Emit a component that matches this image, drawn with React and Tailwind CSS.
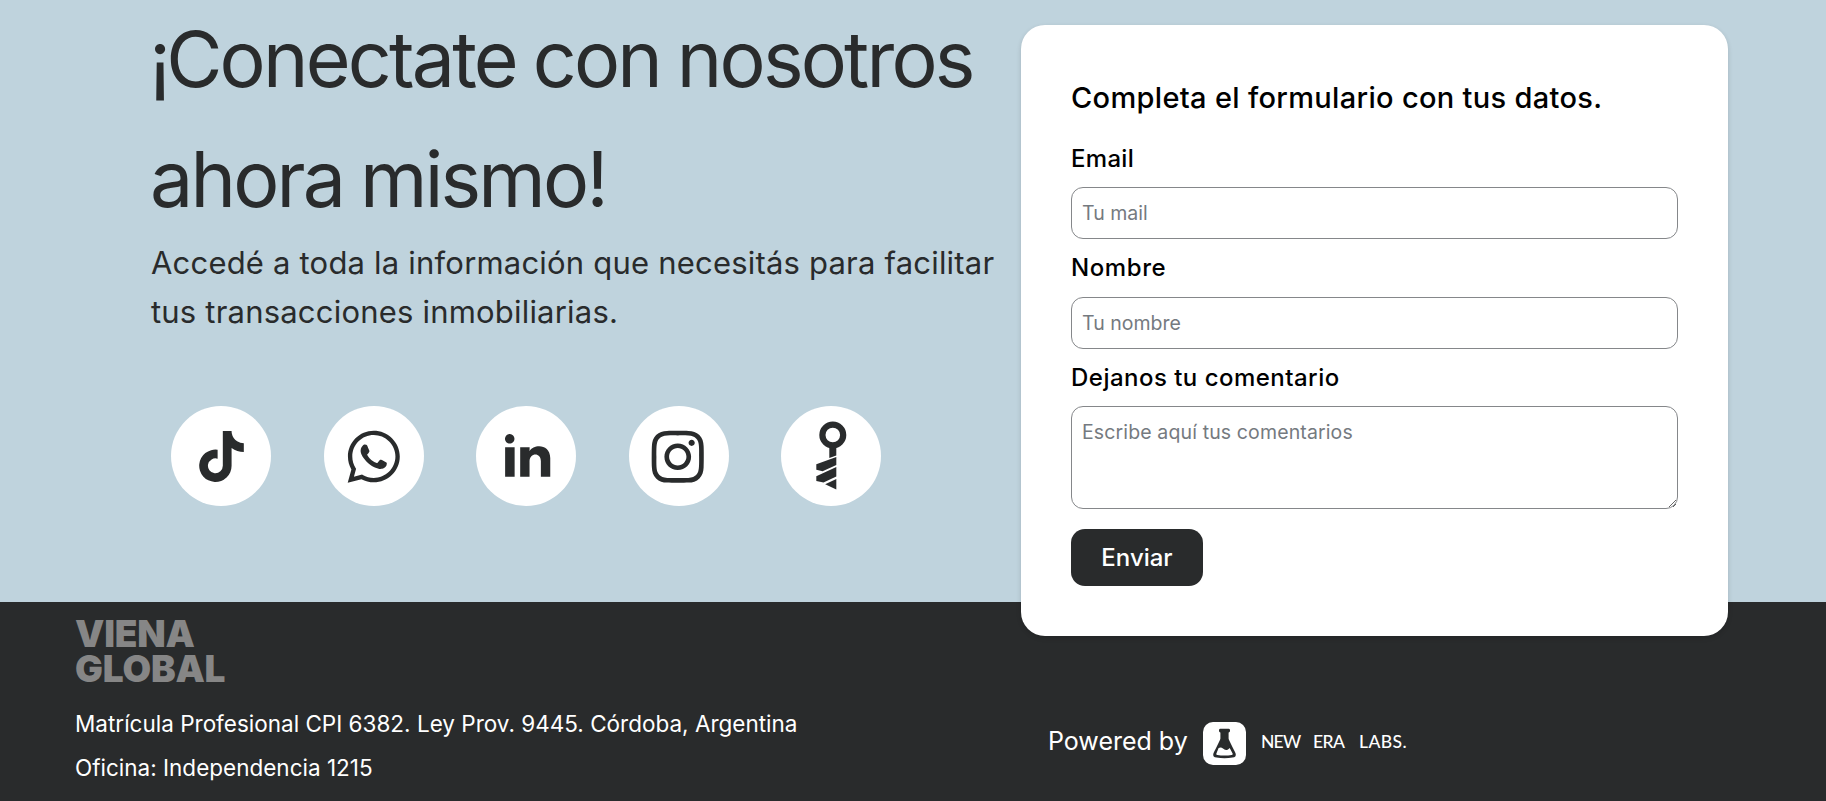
import { FaInstagram, FaTiktok, FaWhatsapp } from "react-icons/fa";
import { RiLinkedinFill } from "react-icons/ri";

function KeyIcon() {
  return (
    <svg viewBox="0 0 31 69" className="h-[69px] w-[31px]">
      <circle cx="16.8" cy="14" r="10.4" fill="none" stroke="currentColor" strokeWidth="6.2" />
      <path fill="currentColor" d="M13.3 25h7v9.6l-7 2.4z" />
      <path fill="currentColor" d="M0.3 43.2 20.3 36v8L6.6 50.2 0.3 48.8z" />
      <path fill="currentColor" d="M0.3 55.2 20.3 46v9.4L7.5 61.6 0.3 60z" />
      <path fill="currentColor" d="M9.2 63.2 20.3 58v10.4z" />
    </svg>
  );
}

function FlaskIcon() {
  return (
    <svg viewBox="0 0 43 43" className="h-[43px] w-[43px]">
      <rect x="16" y="6.8" width="11" height="3.6" rx="1.4" fill="currentColor" />
      <path
        d="M18.4 9v7.6c0 2-5.8 12-7 15-.7 2 .2 3 2.2 3 5 .8 10.8.8 15.8 0 2 0 2.9-1 2.2-3-1.2-3-7-13-7-15V9z"
        fill="currentColor"
        stroke="currentColor"
        strokeWidth="2"
        strokeLinejoin="round"
      />
      <path fill="#fff" d="M15.6 26c1.6-.8 3-.8 4.4.6 1.5 1.5 3.2 1.800 5 .9.7-.4 1.2-.9 1.7-1.5l2.9 5.6c.3.9 0 1.2-.9 1.3-4.6.7-9.8.7-14.400 0-.9-.1-1.200-.4-.9-1.300z" />
    </svg>
  );
}

const social = [
  { name: "TikTok", icon: <FaTiktok className="mt-px h-[51px] w-auto" /> },
  { name: "WhatsApp", icon: <FaWhatsapp className="mt-px h-[59.5px] w-auto" /> },
  { name: "LinkedIn", icon: <RiLinkedinFill className="h-[57px] w-[57px]" /> },
  { name: "Instagram", icon: <FaInstagram className="mt-px mr-px h-[59.5px] w-auto" /> },
  { name: "Inmobiliaria", icon: <KeyIcon /> },
];

const labelClass = "block text-[24px] leading-[36px] font-medium";
const fieldClass =
  "block w-full rounded-[12px] border border-[#85878a] bg-white px-[10px] text-[19.5px] text-black placeholder:text-[#757a80]";

export default function App() {
  return (
    <div className="h-[801px] w-full overflow-hidden bg-[#292b2c] font-['Inter',sans-serif]">
      <section className="flex h-[602px] items-start bg-[#bfd3dd] pl-[151px]">
        <div className="-mt-px w-[870px] shrink-0 text-[#292b2c]">
          <h1 className="-ml-px text-[77px] leading-[120px] tracking-[-2.8px] [word-spacing:-2px]">
            <span className="-ml-px tracking-[-5px]">¡</span>Conectate con nosotros
            <br />
            ahora mismo!
          </h1>
          <p className="-mt-px text-[31px] leading-[49.3px] tracking-[0.2px]">
            Accedé a toda la información que necesitás para facilitar tus transacciones inmobiliarias.
          </p>
          <div className="mt-[69.4px] ml-[20px] flex gap-[52.5px]">
            {social.map((s) => (
              <a key={s.name} aria-label={s.name} className="flex size-[100px] shrink-0 items-center justify-center rounded-full bg-white">
                {s.icon}
              </a>
            ))}
          </div>
        </div>

        <form className="relative z-10 mt-[25px] h-[611px] w-[707px] shrink-0 rounded-[24px] bg-white px-[50px] pt-[53px] text-black shadow-[0_2px_5px_rgba(0,0,0,0.15)]">
          <h2 className="text-[29px] leading-[40px] font-medium tracking-[0.32px]">Completa el formulario con tus datos.</h2>
          <label className={`${labelClass} mt-[23px] tracking-[0.3px]`}>Email</label>
          <input className={`${fieldClass} mt-[10px] h-[52px]`} placeholder="Tu mail" />
          <label className={`${labelClass} mt-[11px] tracking-[0.6px]`}>Nombre</label>
          <input className={`${fieldClass} mt-[11px] h-[52px]`} placeholder="Tu nombre" />
          <label className={`${labelClass} mt-[11px] tracking-[0.48px]`}>Dejanos tu comentario</label>
          <textarea
            className={`${fieldClass} mt-[10px] h-[103px] pt-[9.5px] leading-[30px] tracking-[0.13px]`}
            placeholder="Escribe aquí tus comentarios"
          />
          <button type="button" className="mt-[20px] flex h-[57px] w-[132px] items-center justify-center rounded-[14px] bg-[#292b2c] text-[24px] font-medium text-white">
            Enviar
          </button>
        </form>
      </section>

      <footer className="flex h-[199px] pl-[75px] text-white">
        <div className="w-[972px] shrink-0 pt-[14px]">
          <div className="text-[37px] leading-[35px] font-black tracking-[-0.2px] text-[#868686]">
            VIENA
            <br />
            GLOBAL
          </div>
          <p className="mt-[16px] text-[22.5px] leading-[44px]">
            Matrícula Profesional CPI 6382. Ley Prov. 9445. Córdoba, Argentina
            <br />
            Oficina: Independencia 1215
          </p>
        </div>
        <div className="mt-[120px] flex h-[43px] items-center">
          <span className="w-[156px] pb-[6px] pl-px text-[25px] leading-[36px]">Powered by</span>
          <span className="size-[43px] overflow-hidden rounded-[10px] bg-white text-[#292b2c]">
            <FlaskIcon />
          </span>
          <span className="ml-[15px] flex pb-[4px] font-['Lato',sans-serif] text-[17.5px] leading-6 font-medium">
            <span className="w-[52px] tracking-[-0.8px]">NEW</span>
            <span className="w-[46px] tracking-[-0.6px]">ERA</span>
            <span className="tracking-[0.4px]">LABS.</span>
          </span>
        </div>
      </footer>
    </div>
  );
}
